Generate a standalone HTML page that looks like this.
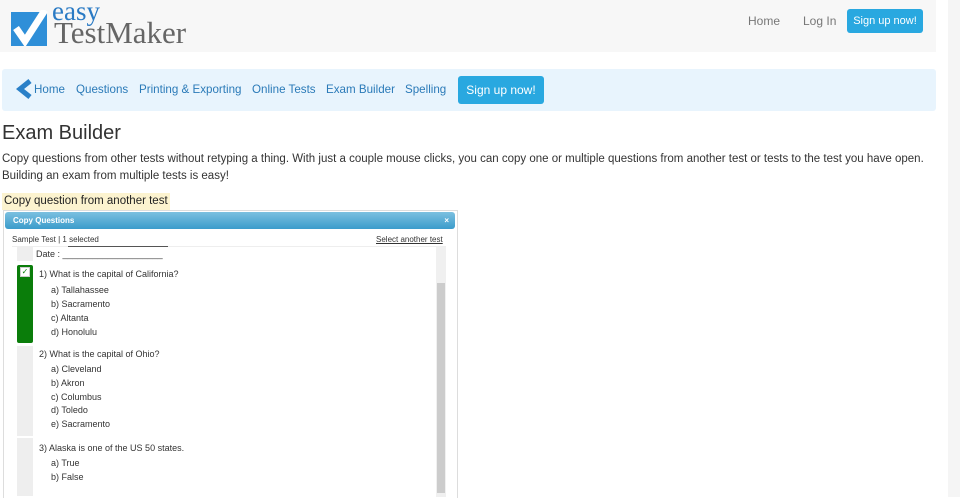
<!DOCTYPE html>
<html><head><style>
body{margin:0;width:960px;height:497px;overflow:hidden;background:#fff;font-family:"Liberation Sans",sans-serif;position:relative;color:#333}
.hdr{position:absolute;left:0;top:0;width:936px;height:52px;background:#f7f7f7}
.strip{position:absolute;left:948px;top:0;width:12px;height:497px;background:#f5f5f5}
.abs{position:absolute}
.nav{position:absolute;left:2px;top:69px;width:934px;height:42px;background:#e8f4fd;border-radius:3px}
.nav a{position:absolute;top:14px;font-size:11.6px;color:#2a7ab8;text-decoration:none}
.btn{position:absolute;background:#29a8e0;color:#fff;border-radius:3px;text-align:center}
.q{position:absolute;font-size:9px;color:#333}
</style></head><body>
<div class="hdr"></div>
<div class="strip"></div>
<svg class="abs" style="left:11px;top:10px" width="40" height="36"><rect x="0" y="2" width="36" height="34" fill="#2f8fd8"/><path d="M5 18 L14 31 L34 0" stroke="#fff" stroke-width="7" fill="none"/></svg>
<div class="abs" style="left:52px;top:-4px;font-family:'Liberation Serif',serif;font-size:27px;color:#2a7ac4">easy</div>
<div class="abs" style="left:54px;top:15px;font-family:'Liberation Serif',serif;font-size:31px;color:#666">TestMaker</div>
<div class="abs" style="left:748px;top:14px;font-size:12px;color:#777">Home</div>
<div class="abs" style="left:803px;top:14px;font-size:12px;color:#777">Log In</div>
<div class="btn" style="left:847px;top:9px;width:76px;height:24px;line-height:24px;font-size:11px">Sign up now!</div>
<div class="nav">
<svg class="abs" style="left:14px;top:10px" width="16" height="20"><path d="M14 2 L4 10 L14 18" stroke="#2a80c8" stroke-width="5" fill="none"/></svg>
<a style="left:32px">Home</a><a style="left:74px">Questions</a><a style="left:137px">Printing &amp; Exporting</a><a style="left:250px">Online Tests</a><a style="left:324px">Exam Builder</a><a style="left:403px">Spelling</a>
<div class="btn" style="left:456px;top:7px;width:86px;height:28px;line-height:28px;font-size:12px">Sign up now!</div>
</div>
<div class="abs" style="left:2px;top:122px;font-size:20px;color:#333">Exam Builder</div>
<div class="abs" style="left:2px;top:151px;width:930px;font-size:11.5px;line-height:16.5px;color:#333">Copy questions from other tests without retyping a thing. With just a couple mouse clicks, you can copy one or multiple questions from another test or tests to the test you have open. Building an exam from multiple tests is easy!</div>
<div class="abs" style="left:2px;top:193px;height:17px;padding:0 2px;background:#fcf3cf;font-size:11.5px;line-height:17px;color:#222">Copy question from another test</div>
<div class="abs" style="left:3px;top:210px;width:453px;height:287px;border:1px solid #ddd;border-bottom:none;background:#fff"></div>
<div class="abs" style="left:5px;top:212px;width:450px;height:17px;background:linear-gradient(#7cc0e0,#3b9ccb);border-radius:3px;color:#fff;font-size:8px;font-weight:bold;line-height:17px;text-indent:8px">Copy Questions<span style="position:absolute;right:6px">×</span></div>
<div class="q" style="left:12px;top:235px;font-size:8px">Sample Test | 1 selected</div>
<div class="q" style="left:376px;top:235px;font-size:8px;text-decoration:underline">Select another test</div>
<div class="abs" style="left:12px;top:246px;width:434px;height:251px;border-top:1px solid #eee"></div>
<div class="abs" style="left:17px;top:247px;width:16px;height:14px;background:#eee"></div>
<div class="abs" style="left:17px;top:265px;width:16px;height:78px;background:#0a7d0a;border-radius:2px"></div>
<div class="abs" style="left:20px;top:267px;width:8px;height:8px;background:#fff;border:1px solid #ccc;font-size:8px;line-height:8px;color:#0a7d0a;text-align:center">✓</div>
<div class="abs" style="left:17px;top:346px;width:16px;height:90px;background:#eee"></div>
<div class="abs" style="left:17px;top:438px;width:16px;height:58px;background:#eee"></div>
<div class="abs" style="left:436px;top:247px;width:10px;height:250px;background:#f0f0f0"></div>
<div class="abs" style="left:437px;top:283px;width:8px;height:210px;background:#ccc"></div>
<div class="abs" style="left:68px;top:246px;width:100px;border-top:1px solid #555"></div>
<div class="q" style="left:36px;top:249px">Date : ____________________</div>
<div class="q" style="left:39px;top:269px">1) What is the capital of California?</div>
<div class="q" style="left:51px;top:283px;line-height:14px">a) Tallahassee<br>b) Sacramento<br>c) Altanta<br>d) Honolulu</div>
<div class="q" style="left:39px;top:349px">2) What is the capital of Ohio?</div>
<div class="q" style="left:51px;top:363px;line-height:13.8px">a) Cleveland<br>b) Akron<br>c) Columbus<br>d) Toledo<br>e) Sacramento</div>
<div class="q" style="left:39px;top:443px">3) Alaska is one of the US 50 states.</div>
<div class="q" style="left:51px;top:456px;line-height:14px">a) True<br>b) False</div>
</body></html>
